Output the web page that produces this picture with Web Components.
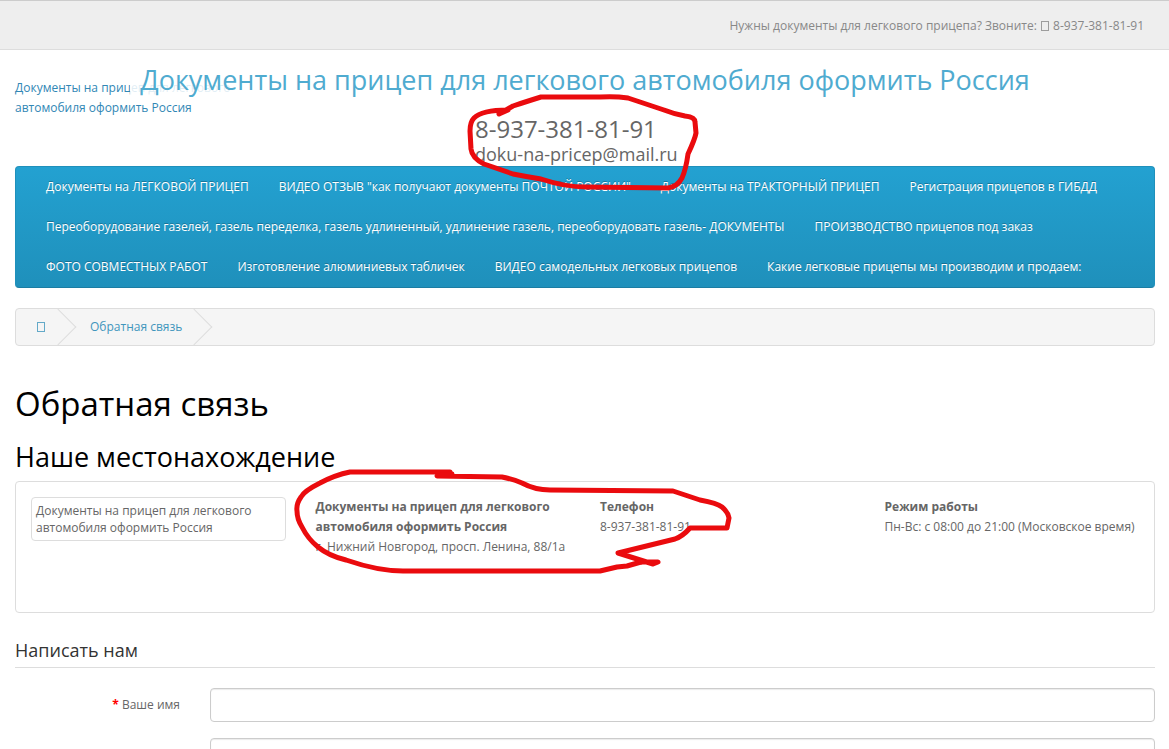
<!DOCTYPE html>
<html lang="ru">
<head>
<meta charset="utf-8">
<meta name="viewport" content="width=device-width, initial-scale=1">
<title>Обратная связь</title>
<style>
html { scrollbar-width: none; }
body { margin: 0; background: #fff; color: #666; font: 400 12px/20px "Open Sans", sans-serif; }
</style>
</head>
<body>
<contact-page></contact-page>
<script>
const define = (name, html) => {
  const template = document.createElement('template');
  template.innerHTML = '<style>*, ::before, ::after { box-sizing: border-box; } :host { display: block; box-sizing: border-box; }</style>' + html;
  customElements.define(name, class extends HTMLElement {
    constructor() {
      super();
      this.attachShadow({ mode: 'open' }).append(template.content.cloneNode(true));
    }
  });
};

/* Empty box shown in place of an icon-font glyph */
define('glyph-box', `
<style>
:host { display: inline-block; width: 8px; height: 10px; margin: 0 1px; border: 1px solid currentColor; opacity: .8; vertical-align: -1px; }
</style>`);

define('top-bar', `
<style>
:host { background: #eee; border-top: 1px solid #ccc; border-bottom: 1px solid #ddd; padding: 15px 25px 13px; text-align: right; color: #888; }
</style>
<slot></slot>`);

define('site-header', `
<style>
:host { display: grid; padding: 10px 0 0; }
.logo, .lead { grid-area: 1 / 1; }
.logo { justify-self: start; width: 240px; padding-top: 18px; }
.logo ::slotted(a) { color: #3187b5; text-decoration: none; }
.lead { display: flex; flex-direction: column; align-items: center; }
.title { margin: 0; padding: 0 10px; background: rgba(255,255,255,.85); color: #4fabd0; font-weight: 400; font-size: 27px; line-height: 40px; }
.contact { padding: 16px 0 0; width: 220px; }
.phone, .mail { margin: 0; font-size: 24px; line-height: 26px; }
.mail { font-size: 18px; line-height: 24px; }
</style>
<div class="logo"><slot name="logo"></slot></div>
<div class="lead">
  <h1 class="title"><slot name="title"></slot></h1>
  <div class="contact">
    <p class="phone"><slot name="phone"></slot></p>
    <p class="mail"><slot name="mail"></slot></p>
  </div>
</div>`);

define('main-menu', `
<style>
nav { display: flex; flex-wrap: wrap; padding: 0 15px; border: 1px solid; border-color: #1f90bb #1f90bb #1b7da3; border-radius: 4px; background: linear-gradient(#23a1d1, #1f90bb); }
</style>
<nav aria-label="Меню"><slot></slot></nav>`);

define('menu-item', `
<style>
a { display: block; padding: 10px 15px; color: #fff; text-decoration: none; text-shadow: 0 -1px 0 rgba(0,0,0,.25); }
</style>
<a href="#"><slot></slot></a>`);

define('crumb-trail', `
<style>
:host { margin: 20px 0 0; }
nav { display: flex; gap: 4px; overflow: hidden; border: 1px solid #ddd; border-radius: 4px; background: #f5f5f5; }
</style>
<nav aria-label="Навигация"><slot></slot></nav>`);

define('crumb-link', `
<style>
:host { position: relative; padding: 8px 20px; }
:host::after { content: ""; position: absolute; top: 5px; right: -5px; width: 26px; height: 26px; border: 1px solid #ddd; border-left: 0; border-bottom: 0; transform: rotate(45deg); }
a { color: #3f96bd; text-decoration: none; }
</style>
<a href="#"><slot></slot></a>`);

define('store-panel', `
<style>
:host { display: grid; grid-template-columns: repeat(4, minmax(0, 1fr)); gap: 30px; align-items: start; min-height: 132px; padding: 15px; border: 1px solid #ddd; border-radius: 4px; }
</style>
<slot></slot>`);

define('store-thumb', `
<style>
:host { padding: 4px; border: 1px solid #ddd; border-radius: 4px; line-height: 17px; }
</style>
<slot></slot>`);

define('store-detail', `
<style>
strong { display: block; font-weight: 700; }
</style>
<strong><slot name="label"></slot></strong><slot></slot>`);

define('form-row', `
<style>
:host { display: grid; grid-template-columns: calc((100% + 30px) / 6 - 30px) minmax(0, 1fr); gap: 30px; margin-bottom: 16px; }
label { padding-top: 7px; text-align: right; }
label::before { content: "* "; color: #f00; font-weight: 700; }
input { width: 100%; height: 34px; padding: 6px 12px; border: 1px solid #ccc; border-radius: 4px; background: #fff; color: #555; font: inherit; box-shadow: inset 0 1px 1px rgba(0,0,0,.08); }
</style>
<label for="field"><slot></slot></label>
<input id="field" type="text">`);

/* Freehand marker strokes laid over the page */
define('marker-strokes', `
<style>
:host { position: absolute; top: 0; left: 0; pointer-events: none; }
svg { display: block; fill: none; stroke: #ea0b0e; stroke-width: 5; stroke-linecap: round; stroke-linejoin: round; }
</style>
<svg width="760" height="600" viewBox="0 0 760 600" aria-hidden="true">
  <path d="M499 114 L508 110 Q482 110 474 118 Q470 122 470 131 L471 149 Q472 158 484 164 L513 174 Q528 177 541 179 Q565 187 586 187 L668 188 Q677 187 682 178 Q686 169 688 154 Q695 139 696 133 L695 122 Q695 117 685 116 Q674 114 664 110 L628 98 Q615 96 600 97 L541 97 Q525 102 513 106 L499 114"/>
  <path d="M450 472 L350 472 Q335 475 320 483 Q304 491 301 497 Q296 504 297 511 Q297 519 302 527 Q308 539 318 547 Q329 556 346 560 Q378 571 403 571 L600 571 L617 567 L627 566 L641 562"/>
  <path d="M452 474 L437 476 L502 477 Q513 479 522 483 Q535 490 550 490 L673 491 L700 500 Q717 503 722 507 Q728 512 729 518 L727 528 L690 528 Q683 536 675 539 L618 553 L653 564 L658 562 L641 562"/>
</svg>`);

define('contact-page', `
<style>
:host { position: relative; }
main { padding: 0 14px 0 15px; }
h2 { margin: 38px 0 0; color: #000; font-weight: 400; font-size: 33px; line-height: 40px; }
h3 { margin: 17px 0 8px; color: #000; font-weight: 400; font-size: 27px; line-height: 32px; }
form { margin: 0; }
fieldset { min-width: 0; margin: 24px 0 0; padding: 0; border: 0; }
legend { display: block; width: 100%; margin: 0 0 20px; padding: 0 0 4px; border-bottom: 1px solid #ddd; color: #333; font-size: 18px; line-height: 26px; }
</style>
<top-bar>Нужны документы для легкового прицепа? Звоните: <glyph-box></glyph-box> 8-937-381-81-91</top-bar>
<main>
  <site-header>
    <a slot="logo" href="#">Документы на прицеп для легкового автомобиля оформить Россия</a>
    <span slot="title">Документы на прицеп для легкового автомобиля оформить Россия</span>
    <span slot="phone">8-937-381-81-91</span>
    <span slot="mail">doku-na-pricep@mail.ru</span>
  </site-header>
  <main-menu>
    <menu-item>Документы на ЛЕГКОВОЙ ПРИЦЕП</menu-item>
    <menu-item>ВИДЕО ОТЗЫВ "как получают документы ПОЧТОЙ РОССИИ"</menu-item>
    <menu-item>Документы на ТРАКТОРНЫЙ ПРИЦЕП</menu-item>
    <menu-item>Регистрация прицепов в ГИБДД</menu-item>
    <menu-item>Переоборудование газелей, газель переделка, газель удлиненный, удлинение газель, переоборудовать газель- ДОКУМЕНТЫ</menu-item>
    <menu-item>ПРОИЗВОДСТВО прицепов под заказ</menu-item>
    <menu-item>ФОТО СОВМЕСТНЫХ РАБОТ</menu-item>
    <menu-item>Изготовление алюминиевых табличек</menu-item>
    <menu-item>ВИДЕО самодельных легковых прицепов</menu-item>
    <menu-item>Какие легковые прицепы мы производим и продаем:</menu-item>
  </main-menu>
  <crumb-trail>
    <crumb-link><glyph-box></glyph-box></crumb-link>
    <crumb-link>Обратная связь</crumb-link>
  </crumb-trail>
  <h2>Обратная связь</h2>
  <h3>Наше местонахождение</h3>
  <store-panel>
    <store-thumb>Документы на прицеп для легкового автомобиля оформить Россия</store-thumb>
    <store-detail><span slot="label">Документы на прицеп для легкового автомобиля оформить Россия</span>г. Нижний Новгород, просп. Ленина, 88/1а</store-detail>
    <store-detail><span slot="label">Телефон</span>8-937-381-81-91</store-detail>
    <store-detail><span slot="label">Режим работы</span>Пн-Вс: с 08:00 до 21:00 (Московское время)</store-detail>
  </store-panel>
  <form>
    <fieldset>
      <legend>Написать нам</legend>
      <form-row>Ваше имя</form-row>
      <form-row>Ваш E-Mail</form-row>
    </fieldset>
  </form>
</main>
<marker-strokes></marker-strokes>`);
</script>
</body>
</html>
